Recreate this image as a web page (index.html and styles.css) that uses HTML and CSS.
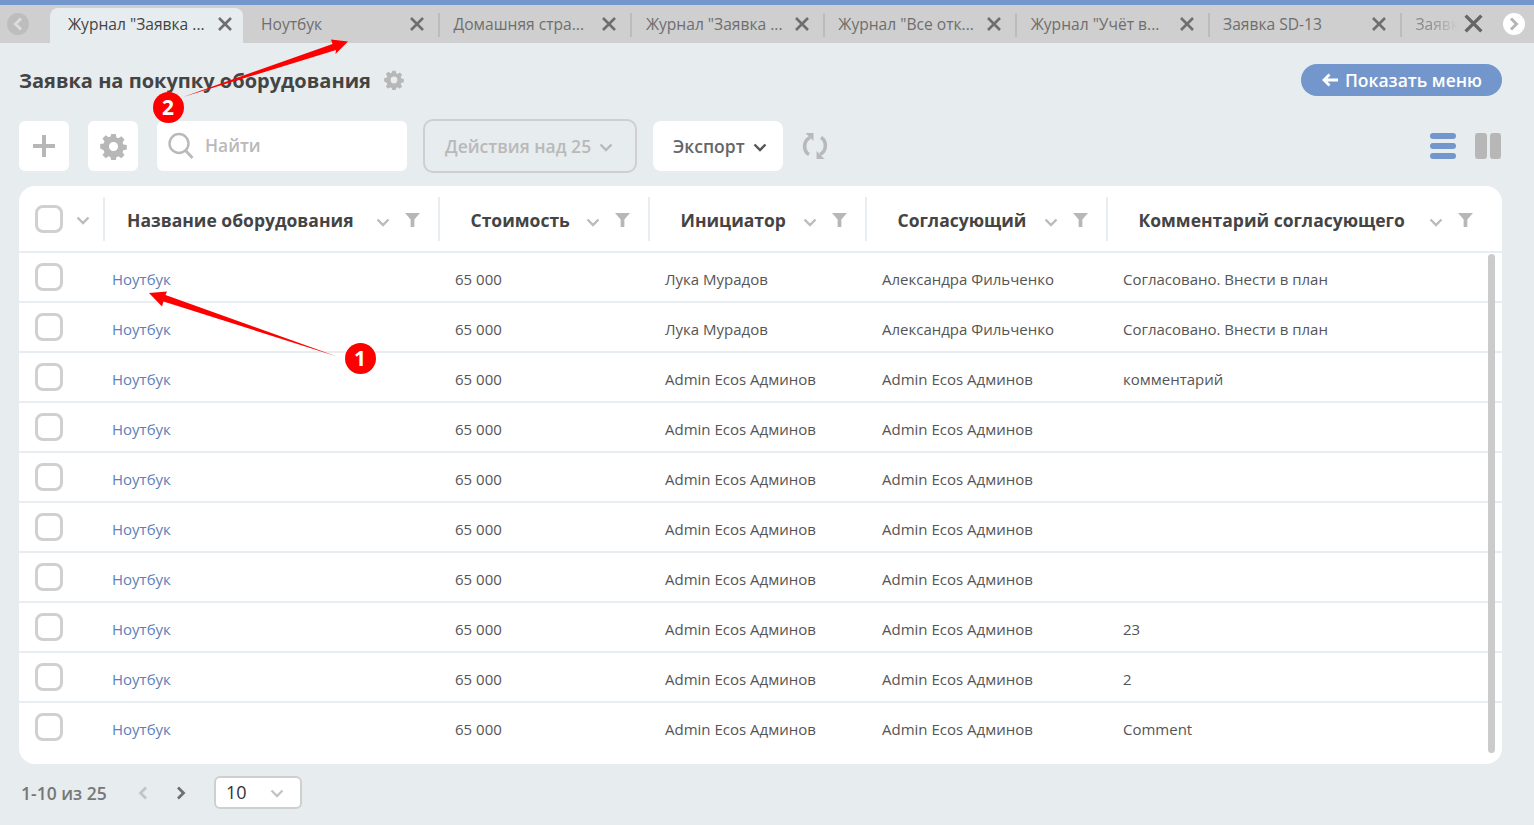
FILE: index.html
```html
<!DOCTYPE html>
<html lang="ru">
<head>
    <meta charset="UTF-8">
    <title>Заявка на покупку оборудования</title>
    <link rel="stylesheet" href="styles.css">
</head>
<body>
<svg class="defs">
    <symbol id="x" viewBox="0 0 16 16"><path d="M2 2 14 14M14 2 2 14" fill="none" stroke="currentColor" stroke-width="2.6"/></symbol>
    <symbol id="chev" viewBox="0 0 14 9"><path d="M1.500 1.500 7 7l5.500-5.500" fill="none" stroke="currentColor" stroke-width="2.4"/></symbol>
    <symbol id="funnel" viewBox="0 0 16 15"><path d="M0 0h16L10 7v8H6V7z" fill="currentColor"/></symbol>
    <symbol id="gear" viewBox="-1 -1 26 26">
        <path fill="currentColor" fill-rule="evenodd" d="M9.800 0h4.400l.6 3.300 1.900.8 2.800-1.900 3.100 3.100-1.900 2.800.8 1.900 3.300.6v4.400l-3.300.6-.8 1.900 1.900 2.800-3.100 3.100-2.800-1.900-1.900.8-.6 3.300H9.800l-.6-3.300-1.900-.8-2.800 1.900-3.100-3.100 1.900-2.800-.8-1.900L-.8 14v-4.400l3.300-.6.8-1.900-1.900-2.800 3.100-3.100 2.800 1.900 1.900-.8zM12 7.600a4.400 4.400 0 1 0 0 8.800 4.400 4.400 0 0 0 0-8.800z"/>
    </symbol>
</svg>

<div class="topline"></div>
<div class="tabs">
    <span class="tabnav tabnav-prev"><svg width="10" height="14" viewBox="0 0 10 14"><path d="M8 1.500 2.500 7 8 12.500" fill="none" stroke="#dcdcdc" stroke-width="3"/></svg></span>
    <div class="tab tab-active"><span class="tab-text">Журнал "Заявка ...</span><svg class="tab-x"><use href="#x"/></svg></div>
    <div class="tab tab-second"><span class="tab-text">Ноутбук</span><svg class="tab-x"><use href="#x"/></svg></div>
    <div class="tab"><span class="tab-text">Домашняя стра...</span><svg class="tab-x"><use href="#x"/></svg></div>
    <div class="tab"><span class="tab-text">Журнал "Заявка ...</span><svg class="tab-x"><use href="#x"/></svg></div>
    <div class="tab"><span class="tab-text">Журнал "Все отк...</span><svg class="tab-x"><use href="#x"/></svg></div>
    <div class="tab"><span class="tab-text">Журнал "Учёт в...</span><svg class="tab-x"><use href="#x"/></svg></div>
    <div class="tab"><span class="tab-text">Заявка SD-13</span><svg class="tab-x"><use href="#x"/></svg></div>
    <div class="tab tab-last"><span class="tab-text tab-fade">Заявк</span></div>
    <svg class="tabs-close"><use href="#x"/></svg>
    <span class="tabnav tabnav-next"><svg width="10" height="14" viewBox="0 0 10 14"><path d="M2 1.500 7.500 7 2 12.500" fill="none" stroke="#b5b5b5" stroke-width="3"/></svg></span>
</div>

<div class="page">
    <div class="title-row">
        <h1 class="title">Заявка на покупку оборудования</h1>
        <svg class="title-gear"><use href="#gear"/></svg>
        <a class="menu-btn" href="#"><svg width="16" height="14" viewBox="0 0 16 14"><path d="M7.500 1.500 2 7l5.500 5.500M2.500 7H16" fill="none" stroke="#fff" stroke-width="2.800"/></svg>Показать меню</a>
    </div>

    <div class="toolbar">
        <span class="tool"><svg width="22" height="22" viewBox="0 0 22 22"><path d="M11 0v22M0 11h22" stroke="#b7b7b7" stroke-width="4"/></svg></span>
        <span class="tool tool-gear"><svg class="tool-gear-icon"><use href="#gear"/></svg></span>
        <div class="search">
            <svg width="26" height="28" viewBox="0 0 26 28"><circle cx="11" cy="11.500" r="9.500" fill="none" stroke="#b9b9b9" stroke-width="2.400"/><path d="M17.500 18.500 24.500 26" stroke="#b9b9b9" stroke-width="2.800"/></svg>
            <span>Найти</span>
        </div>
        <span class="actions">Действия над 25<svg class="btn-chev"><use href="#chev"/></svg></span>
        <span class="export">Экспорт<svg class="btn-chev"><use href="#chev"/></svg></span>
        <svg class="refresh" width="26" height="26" viewBox="0 0 26 26"><path d="M8 4.500C1 8 1 18 7 21.500M18 21.500C25 18 25 8 19 4.500" fill="none" stroke="#b9b9b9" stroke-width="3.600"/><path d="M3.500 0h8v8zM22.500 26h-8v-8z" fill="#b9b9b9"/></svg>
        <span class="views">
            <span class="view-list"><i></i><i></i><i></i></span>
            <span class="view-cols"><i></i><i></i></span>
        </span>
    </div>

    <div class="journal">
        <div class="row head">
            <div class="cell-check">
                <span class="check"></span><svg class="head-chev"><use href="#chev"/></svg>
            </div>
            <div class="cell cell-name"><b>Название оборудования</b><svg class="head-chev"><use href="#chev"/></svg><svg class="head-filter"><use href="#funnel"/></svg></div>
            <div class="cell"><b>Стоимость</b><svg class="head-chev"><use href="#chev"/></svg><svg class="head-filter"><use href="#funnel"/></svg></div>
            <div class="cell"><b>Инициатор</b><svg class="head-chev"><use href="#chev"/></svg><svg class="head-filter"><use href="#funnel"/></svg></div>
            <div class="cell"><b>Согласующий</b><svg class="head-chev"><use href="#chev"/></svg><svg class="head-filter"><use href="#funnel"/></svg></div>
            <div class="cell cell-comment"><b>Комментарий согласующего</b><svg class="head-chev"><use href="#chev"/></svg><svg class="head-filter"><use href="#funnel"/></svg></div>
        </div>
        <div class="row"><div class="cell-check"><span class="check"></span></div><a class="cell link" href="#">Ноутбук</a><div class="cell">65 000</div><div class="cell">Лука Мурадов</div><div class="cell">Александра Фильченко</div><div class="cell">Согласовано. Внести в план</div></div>
        <div class="row"><div class="cell-check"><span class="check"></span></div><a class="cell link" href="#">Ноутбук</a><div class="cell">65 000</div><div class="cell">Лука Мурадов</div><div class="cell">Александра Фильченко</div><div class="cell">Согласовано. Внести в план</div></div>
        <div class="row"><div class="cell-check"><span class="check"></span></div><a class="cell link" href="#">Ноутбук</a><div class="cell">65 000</div><div class="cell">Admin Ecos Админов</div><div class="cell">Admin Ecos Админов</div><div class="cell">комментарий</div></div>
        <div class="row"><div class="cell-check"><span class="check"></span></div><a class="cell link" href="#">Ноутбук</a><div class="cell">65 000</div><div class="cell">Admin Ecos Админов</div><div class="cell">Admin Ecos Админов</div><div class="cell"></div></div>
        <div class="row"><div class="cell-check"><span class="check"></span></div><a class="cell link" href="#">Ноутбук</a><div class="cell">65 000</div><div class="cell">Admin Ecos Админов</div><div class="cell">Admin Ecos Админов</div><div class="cell"></div></div>
        <div class="row"><div class="cell-check"><span class="check"></span></div><a class="cell link" href="#">Ноутбук</a><div class="cell">65 000</div><div class="cell">Admin Ecos Админов</div><div class="cell">Admin Ecos Админов</div><div class="cell"></div></div>
        <div class="row"><div class="cell-check"><span class="check"></span></div><a class="cell link" href="#">Ноутбук</a><div class="cell">65 000</div><div class="cell">Admin Ecos Админов</div><div class="cell">Admin Ecos Админов</div><div class="cell"></div></div>
        <div class="row"><div class="cell-check"><span class="check"></span></div><a class="cell link" href="#">Ноутбук</a><div class="cell">65 000</div><div class="cell">Admin Ecos Админов</div><div class="cell">Admin Ecos Админов</div><div class="cell">23</div></div>
        <div class="row"><div class="cell-check"><span class="check"></span></div><a class="cell link" href="#">Ноутбук</a><div class="cell">65 000</div><div class="cell">Admin Ecos Админов</div><div class="cell">Admin Ecos Админов</div><div class="cell">2</div></div>
        <div class="row row-last"><div class="cell-check"><span class="check"></span></div><a class="cell link" href="#">Ноутбук</a><div class="cell">65 000</div><div class="cell">Admin Ecos Админов</div><div class="cell">Admin Ecos Админов</div><div class="cell">Comment</div></div>
        <span class="scrollbar"></span>
    </div>

    <div class="pager">
        <span class="pager-count">1-10 из 25</span>
        <svg class="pager-arrow" width="10" height="14" viewBox="0 0 10 14"><path d="M8 1.500 2.500 7 8 12.500" fill="none" stroke="#c4c4c4" stroke-width="2.800"/></svg>
        <svg class="pager-arrow" width="10" height="14" viewBox="0 0 10 14"><path d="M2 1.500 7.500 7 2 12.500" fill="none" stroke="#6f6f6f" stroke-width="2.800"/></svg>
        <span class="pager-size">10<svg class="pager-chev"><use href="#chev"/></svg></span>
    </div>
</div>

<!-- стрелки поверх скриншота -->
<svg class="marks" width="1534" height="825" viewBox="0 0 1534 825">
    <polygon fill="#fe0000" points="149,293 167,291.500 165.500,295 337,356.500 163.500,301.500 162,306.500"/>
    <polygon fill="#fe0000" points="348,41.500 331,39.500 332.500,44 183,97 336,50 335.500,54"/>
</svg>
<span class="badge badge-one">1</span>
<span class="badge badge-two">2</span>
</body>
</html>
```

FILE: styles.css
```css
*{
    margin: 0;
    padding: 0;
    box-sizing: border-box;
}
html,body{
    height: 100%;
    overflow: hidden;
}
body{
    position: relative;
    background-color: #e7ecef;
    font-family: "Open Sans", "Noto Sans", sans-serif;
    font-size: 15px;
    color: #555;
}
.defs{
    display: none;
}
.topline{
    height: 5px;
    background-color: #7396cd;
}

/* вкладки */
.tabs{
    position: relative;
    display: flex;
    height: 38px;
    padding-left: 50px;
    background-color: #cfcfcf;
    overflow: hidden;
}
.tab{
    flex: none;
    display: flex;
    align-items: center;
    width: 192.4px;
    height: 24px;
    margin-top: 8px;
    padding-left: 13.5px;
    border-right: 2px solid #bcbcbc;
    color: #6e6e6e;
    font-size: 15.6px;
    white-space: nowrap;
}
.tab-text{
    flex: 1;
    margin-top: -3px;
}
.tab-x{
    width: 16px;
    height: 16px;
    margin-right: 13px;
    margin-top: -2px;
    color: #6e6e6e;
}
.tab-active{
    width: 193px;
    height: 35px;
    margin-top: 3px;
    padding-left: 18px;
    padding-bottom: 1px;
    background-color: #e7ecef;
    border: 0;
    border-radius: 8px 8px 0 0;
    color: #444;
}
.tab-active .tab-x{
    margin-right: 10px;
}
.tab-second{
    width: 193px;
    margin-left: 4px;
    padding-left: 14px;
}
.tab-last{
    border: 0;
    width: 60px;
}
.tab-fade{
    color: #8a8a8a;
    -webkit-mask-image: linear-gradient(90deg, #000 30%, transparent 92%);
    mask-image: linear-gradient(90deg, #000 30%, transparent 92%);
}
.tabs-close{
    position: absolute;
    left: 1463px;
    top: 8px;
    width: 21px;
    height: 21px;
    color: #666;
}
.tabnav{
    position: absolute;
    top: 8px;
    display: flex;
    align-items: center;
    justify-content: center;
    width: 22px;
    height: 22px;
    border-radius: 50%;
}
.tabnav-prev{
    left: 7px;
    background-color: #bdbdbd;
}
.tabnav-next{
    left: 1503px;
    background-color: #fff;
}

/* заголовок */
.page{
    padding: 21px 32px 0 19px;
}
.title-row{
    display: flex;
    align-items: center;
    height: 32px;
}
.title{
    font-size: 20px;
    font-weight: 700;
    color: #444;
}
.title-gear{
    width: 20px;
    height: 20px;
    margin-left: 13px;
    color: #b7b7b7;
}
.menu-btn{
    display: flex;
    align-items: center;
    gap: 7px;
    height: 32px;
    margin-left: auto;
    padding: 0 20px 0 21px;
    border-radius: 16px;
    background-color: #7396cd;
    color: #fff;
    font-size: 17.5px;
    font-weight: 600;
    text-decoration: none;
}

/* панель */
.toolbar{
    display: flex;
    align-items: center;
    height: 54px;
    margin-top: 23px;
}
.tool{
    display: flex;
    align-items: center;
    justify-content: center;
    width: 50px;
    height: 50px;
    background-color: #fff;
    border-radius: 6px;
}
.tool-gear{
    margin-left: 19px;
}
.tool-gear-icon{
    width: 27px;
    height: 27px;
    color: #b7b7b7;
}
.search{
    display: flex;
    align-items: center;
    width: 250px;
    height: 50px;
    margin-left: 19px;
    padding-left: 11px;
    background-color: #fff;
    border-radius: 6px;
    color: #b9b9b9;
    font-size: 17.4px;
    font-weight: 600;
}
.search span{
    margin-left: 11px;
    margin-top: -2px;
}
.actions{
    display: flex;
    align-items: center;
    width: 214px;
    height: 54px;
    margin-left: 16px;
    padding-left: 20px;
    border: 2px solid #cfcfcf;
    border-radius: 10px;
    color: #b9b9b9;
    font-size: 17.5px;
    font-weight: 600;
}
.export{
    display: flex;
    align-items: center;
    width: 130px;
    height: 50px;
    margin-left: 16px;
    padding-left: 20px;
    background-color: #fff;
    border-radius: 8px;
    color: #666;
    font-size: 17.5px;
    font-weight: 600;
}
.btn-chev{
    width: 14px;
    height: 9px;
    margin-left: 8px;
    margin-top: 3px;
    color: #b9b9b9;
}
.export .btn-chev{
    color: #555;
}
.refresh{
    margin-left: 19px;
}
.views{
    display: flex;
    gap: 19px;
    margin-left: auto;
    margin-right: 1px;
}
.view-list{
    display: flex;
    flex-direction: column;
    gap: 4px;
    width: 26px;
}
.view-list i{
    height: 6px;
    border-radius: 3px;
    background-color: #7396cd;
}
.view-cols{
    display: flex;
    gap: 3px;
    width: 26px;
}
.view-cols i{
    flex: 1;
    border-radius: 3px;
    background-color: #b7b7b7;
}

/* журнал */
.journal{
    position: relative;
    height: 578px;
    margin-top: 13px;
    background-color: #fff;
    border-radius: 16px;
}
.row{
    display: grid;
    grid-template-columns: 85px 335px 210px 217px 241px 1fr;
    height: 50px;
    border-bottom: 2px solid #e8edf1;
    align-items: center;
}
.row-last{
    border-bottom-color: transparent;
}
.cell-check{
    display: flex;
    align-items: center;
    padding-left: 16px;
}
.cell{
    padding-left: 16px;
    padding-top: 3px;
    white-space: nowrap;
}
.link{
    padding-left: 8px;
    color: #5d7fb8;
    text-decoration: none;
}
.check{
    display: block;
    width: 28px;
    height: 28px;
    border: 3px solid #d0d0d0;
    border-radius: 8px;
    background-color: #fff;
}
.head{
    height: 67px;
}
.head .cell{
    display: flex;
    align-items: center;
    height: 44px;
    margin-left: -1px;
    padding-left: 30.5px;
    padding-right: 19px;
    border-left: 2px solid #e8edf1;
}
.head .cell-name{
    padding-left: 22px;
}
.head .cell-comment{
    padding-right: 29px;
}
.head b{
    font-size: 17.5px;
    font-weight: 700;
    color: #444;
}
.head-chev{
    width: 14px;
    height: 9px;
    margin-left: auto;
    margin-top: 4px;
    color: #bbb;
}
.cell-check .head-chev{
    margin-left: 13px;
}
.head-filter{
    width: 15px;
    height: 14px;
    margin-left: 15px;
    color: #b7b7b7;
}
.scrollbar{
    position: absolute;
    left: 1469px;
    top: 68px;
    bottom: 11px;
    width: 7px;
    border-radius: 4px;
    background-color: #cbcbcb;
}

/* постраничная навигация */
.pager{
    display: flex;
    align-items: center;
    height: 33px;
    margin-top: 12px;
    margin-left: 2px;
}
.pager-count{
    width: 117px;
    font-size: 17.5px;
    font-weight: 600;
    color: #777;
}
.pager-arrow{
    margin-right: 28px;
}
.pager-size{
    display: flex;
    align-items: center;
    justify-content: space-between;
    width: 88px;
    height: 33px;
    padding: 0 15px 2px 10px;
    background-color: #fff;
    border: 2px solid #cfcfcf;
    border-radius: 6px;
    font-size: 18px;
    color: #333;
}
.pager-chev{
    width: 16px;
    height: 9px;
    margin-top: 4px;
    color: #c4c4c4;
}

/* пометки */
.marks{
    position: absolute;
    left: 0;
    top: 0;
    pointer-events: none;
}
.badge{
    position: absolute;
    width: 31px;
    height: 31px;
    border-radius: 50%;
    background-color: #fe0000;
    color: #fff;
    font-size: 21px;
    font-weight: 700;
    line-height: 31px;
    text-align: center;
}
.badge-one{
    left: 344.5px;
    top: 342.5px;
}
.badge-two{
    left: 152.5px;
    top: 91.5px;
}
```
